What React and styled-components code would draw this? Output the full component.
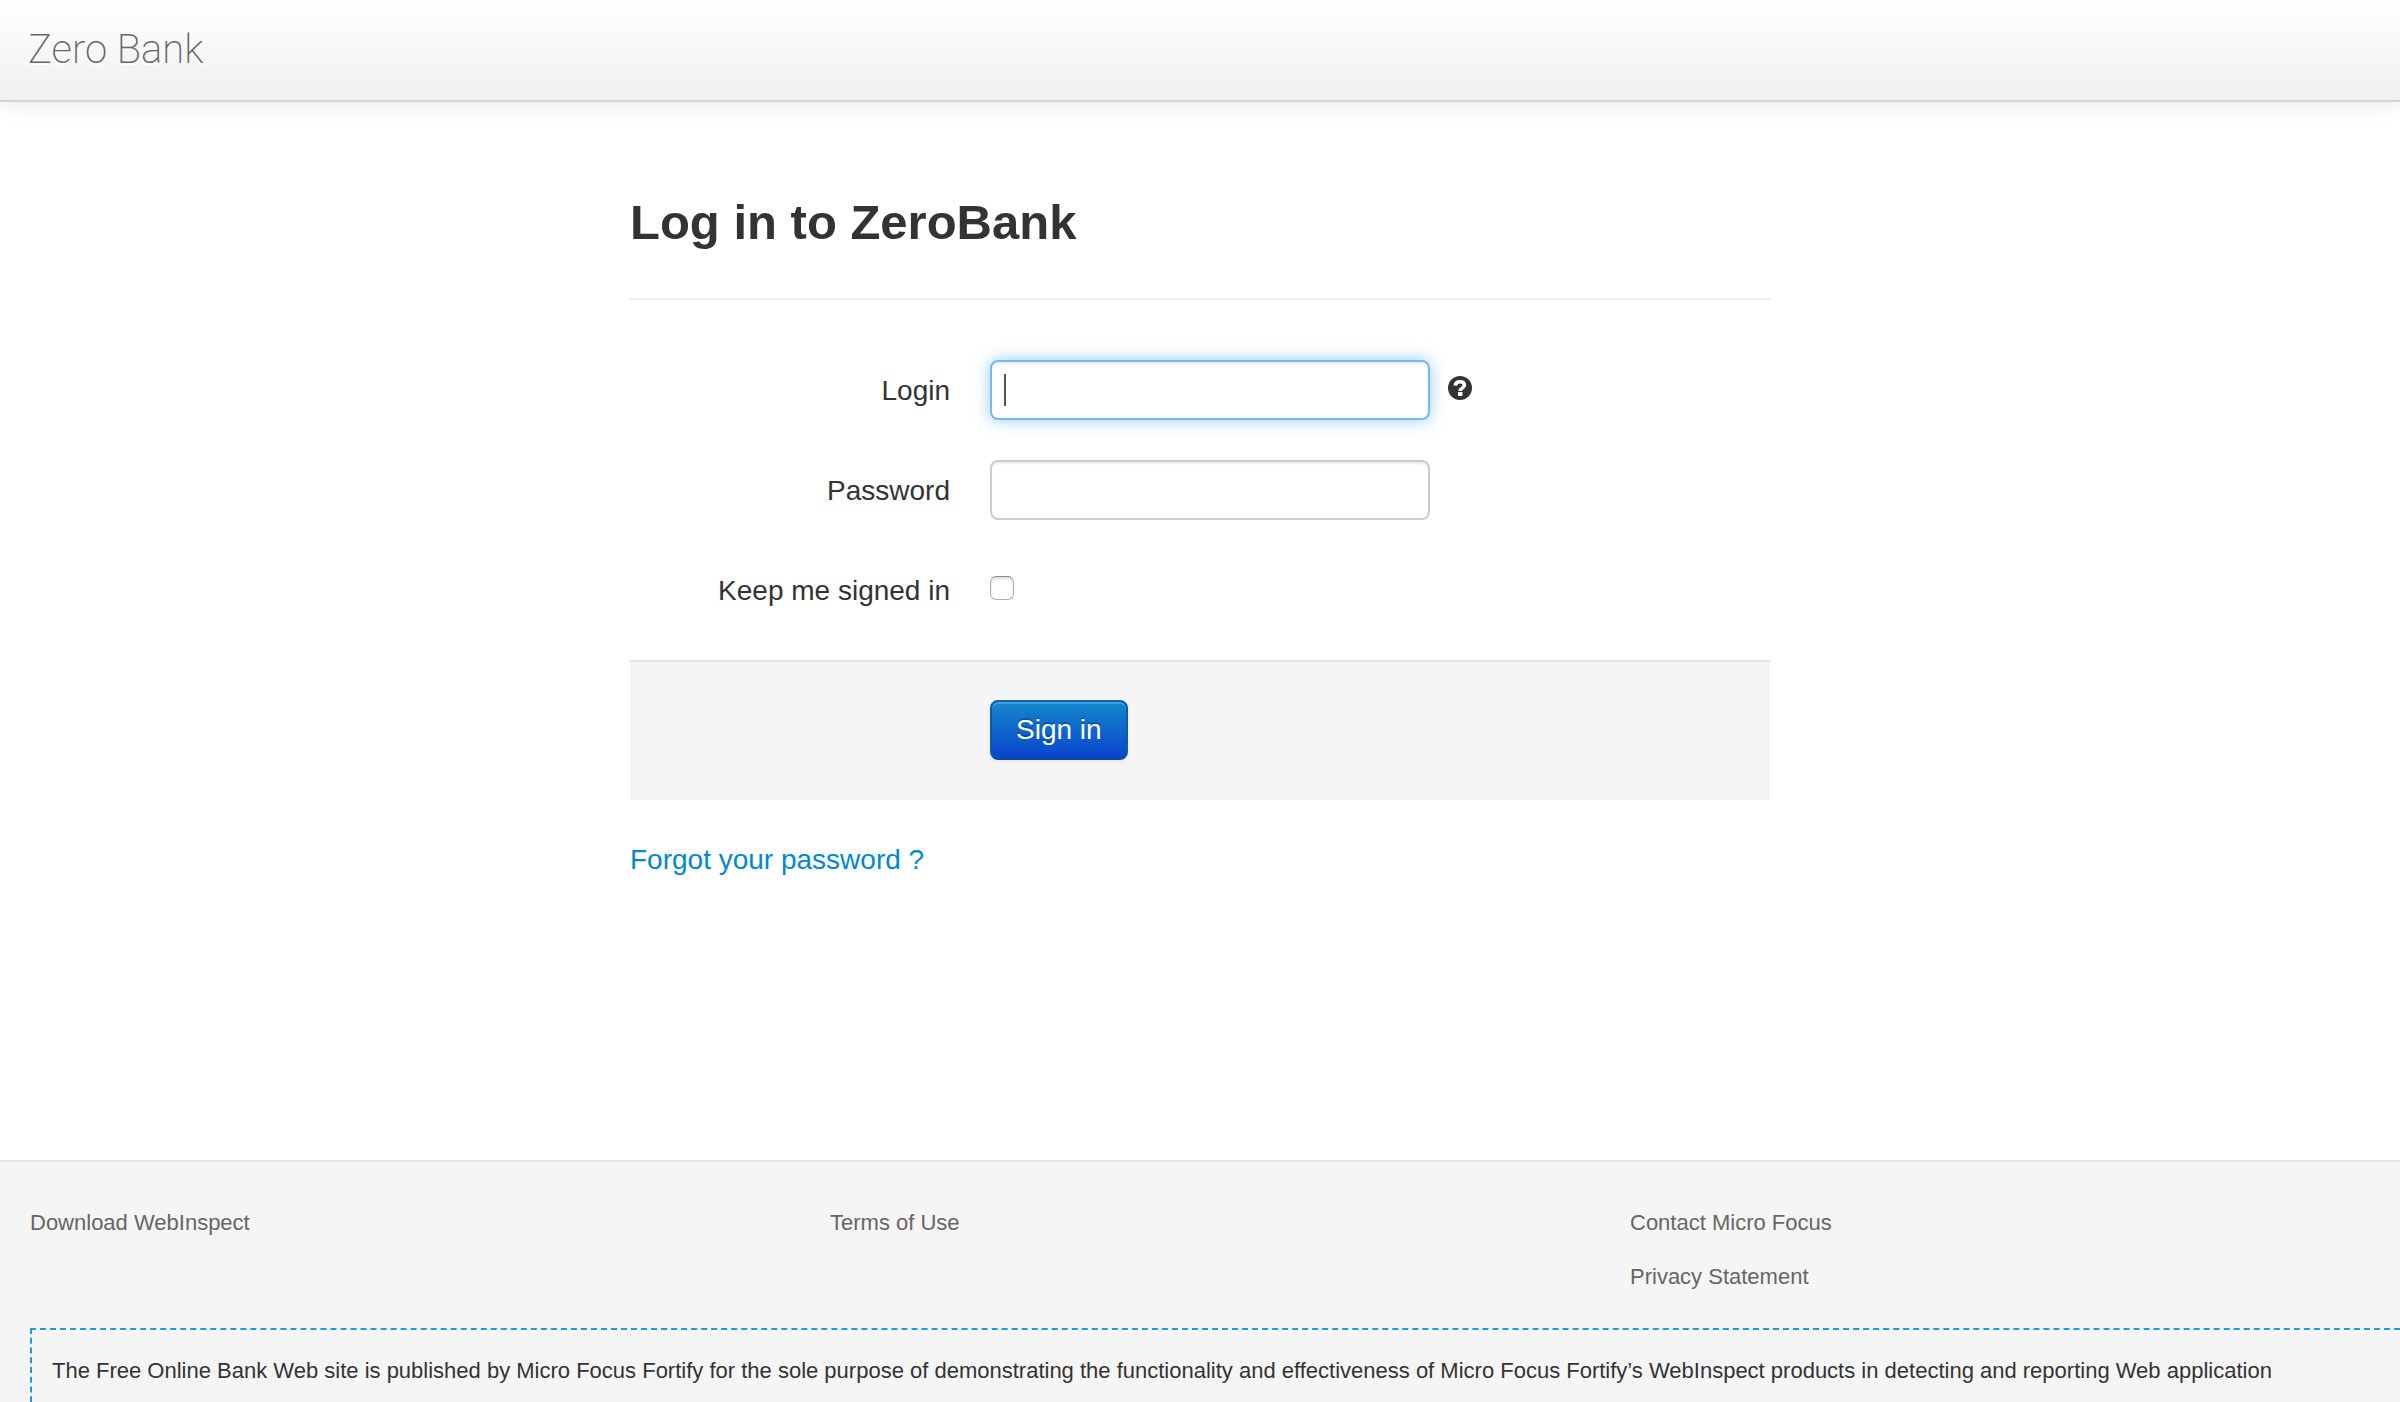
import React from "react";
import styled, { createGlobalStyle } from "styled-components";

const GlobalStyle = createGlobalStyle`
  *, *::before, *::after { box-sizing: border-box; }
  body {
    margin: 0;
    background: #fff;
    color: #333;
    font-family: "Helvetica Neue", Helvetica, "Liberation Sans", Arial, sans-serif;
    font-size: 28px;
    line-height: 40px;
  }
`;

const Page = styled.div`
  display: flex;
  flex-direction: column;
  min-height: 100vh;
`;

const Navbar = styled.header`
  display: flex;
  align-items: center;
  height: 102px;
  padding: 0 28px;
  background: linear-gradient(to bottom, #ffffff, #f0f0f0);
  border-bottom: 2px solid #d4d4d4;
  box-shadow: 0 2px 20px rgba(0, 0, 0, 0.1);
`;

const Brand = styled.a`
  color: #666;
  font-family: Roboto, "Liberation Sans", sans-serif;
  font-size: 40px;
  font-weight: 200;
  text-decoration: none;
  text-shadow: 0 2px 0 #fff;
`;

const Main = styled.main`
  width: 100%;
  max-width: 1140px;
  margin: 0 auto;
  padding: 80px 0 280px;
`;

const Title = styled.h1`
  margin: 0 0 60px;
  padding-bottom: 36px;
  border-bottom: 2px solid #eee;
  font-size: 49px;
  line-height: 80px;
`;

const Row = styled.div`
  display: grid;
  grid-template-columns: 320px 1fr;
  column-gap: 40px;
  margin-bottom: 40px;
`;

const Label = styled.label`
  padding: 11px 0 9px;
  text-align: right;
`;

const Field = styled.div`
  display: flex;
  align-items: center;
  gap: 18px;
  min-height: 60px;
`;

const TextInput = styled.input`
  width: 440px;
  height: 60px;
  padding: 8px 12px;
  border: 2px solid #ccc;
  border-radius: 8px;
  background: #fff;
  box-shadow: inset 0 2px 2px rgba(0, 0, 0, 0.075);
  color: #555;
  font: inherit;
  outline: none;

  &:focus {
    border-color: #75b9f0;
    box-shadow: inset 0 2px 2px rgba(0, 0, 0, 0.075), 0 0 16px rgba(82, 168, 236, 0.6);
  }

  /* A two-pixel caret, wider than the native one, while the box is empty. */
  &:focus:placeholder-shown {
    caret-color: transparent;
    background: linear-gradient(#555, #555) 12px 12px / 2px 32px no-repeat #fff;
  }
`;

const Checkbox = styled.input`
  appearance: none;
  width: 24px;
  height: 24px;
  margin: 0 0 4px;
  border: 1px solid #b0b0b0;
  border-top-color: #8c8c8c;
  border-radius: 6px;
  background: #fff;
  box-shadow: inset 0 2px 3px rgba(0, 0, 0, 0.15);

  &:checked {
    background: #0088cc;
  }
`;

const HelpButton = styled.button`
  display: flex;
  margin: 0 0 4px;
  padding: 0;
  border: 0;
  background: none;
  color: #333;
`;

const Actions = styled.div`
  margin-bottom: 40px;
  padding: 38px 0 40px 360px;
  border-top: 2px solid #e5e5e5;
  background: #f5f5f5;
`;

const SubmitButton = styled.button`
  display: block;
  height: 60px;
  padding: 0 24px;
  border: 2px solid;
  border-color: #0a62ad #0a5cad #0a4a9c;
  border-radius: 8px;
  background: linear-gradient(to bottom, #1488cc, #0a44cc);
  box-shadow: inset 0 2px 0 rgba(255, 255, 255, 0.2), 0 2px 4px rgba(0, 0, 0, 0.05);
  color: #fff;
  font: inherit;
  text-shadow: 0 -2px 0 rgba(0, 0, 0, 0.25);
`;

const ForgotLink = styled.a`
  display: block;
  color: #0088cc;
  text-decoration: none;
`;

const Footer = styled.footer`
  flex: 1;
  display: flex;
  flex-direction: column;
  padding-top: 41px;
  border-top: 2px solid #e5e5e5;
  background: #f5f5f5;
  font-size: 22px;
`;

const FooterColumns = styled.nav`
  display: grid;
  grid-template-columns: repeat(3, 1fr);
  margin-bottom: 31px;
`;

const FooterList = styled.ul`
  display: flex;
  flex-direction: column;
  gap: 14px;
  margin: 0;
  padding: 0 0 0 30px;
  list-style: none;
`;

const FooterLink = styled.a`
  color: #666;
  text-decoration: none;
`;

const Disclaimer = styled.div`
  flex: 1;
  margin-left: 30px;
  padding: 21px 20px;
  border: 2px dashed #1b9bd8;
  border-width: 2px 0 0 2px;
`;

const columns = [
  ["Download WebInspect"],
  ["Terms of Use"],
  ["Contact Micro Focus", "Privacy Statement"],
];

function HelpIcon() {
  return (
    <svg width="24" height="24" viewBox="0 0 24 24" aria-hidden="true">
      <circle cx="12" cy="12" r="12" fill="currentColor" />
      <path
        d="M7.400 9.600C7.500 7.200 9.400 5.800 12 5.800s4.400 1.300 4.400 3.400c0 2.800-4.200 2.600-4.200 5.800"
        fill="none"
        stroke="#fff"
        strokeWidth="3.600"
      />
      <rect x="10" y="16" width="4.400" height="4" fill="#fff" />
    </svg>
  );
}

export default function App() {
  return (
    <Page>
      <GlobalStyle />
      <Navbar>
        <Brand href="#">Zero Bank</Brand>
      </Navbar>
      <Main>
        <Title>Log in to ZeroBank</Title>
        <form>
          <Row>
            <Label htmlFor="login">Login</Label>
            <Field>
              <TextInput id="login" type="text" placeholder=" " autoFocus />
              <HelpButton type="button" aria-label="Help">
                <HelpIcon />
              </HelpButton>
            </Field>
          </Row>
          <Row>
            <Label htmlFor="password">Password</Label>
            <Field>
              <TextInput id="password" type="password" placeholder=" " />
            </Field>
          </Row>
          <Row>
            <Label htmlFor="remember">Keep me signed in</Label>
            <Field>
              <Checkbox id="remember" type="checkbox" />
            </Field>
          </Row>
          <Actions>
            <SubmitButton type="submit">Sign in</SubmitButton>
          </Actions>
        </form>
        <ForgotLink href="#">Forgot your password ?</ForgotLink>
      </Main>
      <Footer>
        <FooterColumns>
          {columns.map((links) => (
            <FooterList key={links[0]}>
              {links.map((text) => (
                <li key={text}>
                  <FooterLink href="#">{text}</FooterLink>
                </li>
              ))}
            </FooterList>
          ))}
        </FooterColumns>
        <Disclaimer>
          The Free Online Bank Web site is published by Micro Focus Fortify for the sole purpose of
          demonstrating the functionality and effectiveness of Micro Focus Fortify’s WebInspect
          products in detecting and reporting Web application
        </Disclaimer>
      </Footer>
    </Page>
  );
}
